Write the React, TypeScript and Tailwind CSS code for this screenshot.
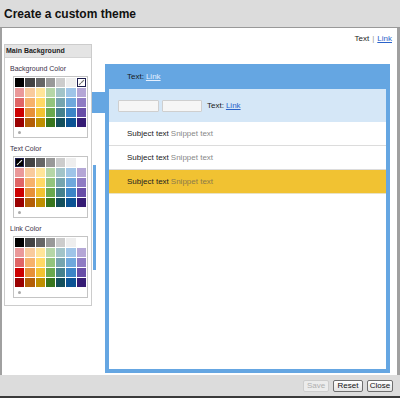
import React from 'react'

const PALETTE: string[][] = [
  ['#000000', '#434343', '#666666', '#999999', '#cccccc', '#eeeeee', '#ffffff'],
  ['#ea9999', '#f9cb9c', '#ffe599', '#b6d7a8', '#a2c4c9', '#9fc5e8', '#b4a7d6'],
  ['#e06666', '#f6b26b', '#ffd966', '#93c47d', '#76a5af', '#6fa8dc', '#8e7cc3'],
  ['#cc0000', '#e69138', '#f1c232', '#6aa84f', '#45818e', '#3d85c6', '#674ea7'],
  ['#990000', '#b45f06', '#bf9000', '#38761d', '#134f5c', '#0b5394', '#351c75'],
]

function Check({ light }: { light?: boolean }) {
  return (
    <svg width="7" height="7" viewBox="0 0 8 8" className="m-auto">
      <path
        d="M1.5 6.5 L3 5 M4 4 L6.5 1.5"
        stroke={light ? '#e8e8e8' : '#777'}
        strokeWidth="1.3"
        fill="none"
        strokeLinecap="round"
      />
    </svg>
  )
}

function Palette({ selected }: { selected?: string }) {
  return (
    <div className="ml-[8px] w-[75px] border border-[#c4c4c4] bg-white p-[1px] pb-0">
      <div className="grid grid-cols-7 gap-[1px]">
        {PALETTE.flat().map((c) => {
          const isSel = c === selected
          return (
            <div
              key={c}
              className={
                isSel
                  ? 'h-[9px] flex border border-[#1d1d4d]'
                  : 'h-[9px]'
              }
              style={{ backgroundColor: c }}
            >
              {isSel && <Check light={c === '#000000'} />}
            </div>
          )
        })}
      </div>
      <div className="h-[10px] flex items-center pl-[3px]">
        <span className="w-[3px] h-[3px] rounded-full bg-[#aaa]" />
      </div>
    </div>
  )
}

function Section({ label, selected }: { label: string; selected?: string }) {
  return (
    <div>
      <div className="mt-[6px] h-[10px] ml-[5px] text-[7px] leading-[10px] text-[#3a2f48]">{label}</div>
      <div className="mt-[2px]">
        <Palette selected={selected} />
      </div>
    </div>
  )
}

function Row({ bg, snippet, border }: { bg: string; snippet: string; border: string }) {
  return (
    <div className={`h-[24px] flex items-center pl-[18px] text-[8px] border-b ${bg} ${border}`}>
      <span className="text-[#222]">Subject text</span>
      <span className={`ml-[2px] ${snippet}`}>Snippet text</span>
    </div>
  )
}

export default function App() {
  return (
    <div className="w-[400px] h-[398px] flex flex-col bg-[#dcdcdc] font-['Liberation_Sans',Arial,sans-serif] overflow-hidden">
      <div className="h-[28px] flex items-center pl-[4px] border-b border-[#999] text-[12px] font-bold text-[#111]">
        Create a custom theme
      </div>

      <div className="flex-1 bg-white border-l-2 border-r-[3px] border-[#a0a0a0] flex flex-col">
        <div className="pt-[6px] h-[16px] flex justify-end pr-[5px] text-[8px] leading-[10px]">
          <span className="text-[#222]">Text</span>
          <span className="mx-[3px] text-[#999]">|</span>
          <span className="text-[#2a62c9] underline">Link</span>
        </div>

        <div className="flex items-start">
          <div className="ml-[2px] w-[88px] h-[262px] border border-[#ccc]">
            <div className="h-[13px] bg-[#e4e4e4] border-b border-[#d4d4d4] pl-[1px] flex items-center text-[7px] font-bold text-[#222]">
              Main Background
            </div>
            <Section label="Background Color" selected="#ffffff" />
            <Section label="Text Color" selected="#000000" />
            <Section label="Link Color" />
          </div>

          <div className="w-[13px] flex flex-col">
            <div className="mt-[48px] h-[21px] bg-[#65a6e2]" />
            <div className="mt-[52px] ml-[1px] w-[3px] h-[105px] bg-[#65a6e2]" />
          </div>

          <div className="mt-[20px] w-[285px] h-[309px] bg-[#65a6e2] flex flex-col px-[4px] pb-[4px]">
            <div className="h-[25px] flex items-center pl-[18px] text-[8px]">
              <span className="text-[#1a1a1a]">Text:</span>
              <span className="ml-[2px] text-[#e4f0ff] underline">Link</span>
            </div>
            <div className="flex-1 bg-white flex flex-col">
              <div className="h-[33px] bg-[#d5e7f7] flex items-center pl-[9px] text-[8px]">
                <div className="w-[41px] h-[12px] bg-[#f6f6f6] border border-[#cfcfcf] rounded-[1px]" />
                <div className="ml-[3px] w-[40px] h-[12px] bg-[#f6f6f6] border border-[#cfcfcf] rounded-[1px]" />
                <span className="ml-[5px] text-[#1a1a1a]">Text:</span>
                <span className="ml-[2px] text-[#2a62c9] underline">Link</span>
              </div>
              <Row bg="bg-white" snippet="text-[#888]" border="border-[#dcdcdc]" />
              <Row bg="bg-white" snippet="text-[#888]" border="border-[#dcdcdc]" />
              <Row bg="bg-[#f1c232]" snippet="text-[#8c7b4c]" border="border-[#e9e2c4]" />
            </div>
          </div>
        </div>
      </div>

      <div className="h-[21px] flex items-center justify-end pr-[7px] gap-[4px] pt-[1px]">
        <button className="w-[26px] h-[12px] rounded-[2px] border border-[#cdcdcd] bg-[#ececec] text-[8px] leading-none text-[#b0b0b0]">
          Save
        </button>
        <button className="w-[30px] h-[12px] rounded-[2px] border border-[#6e6e6e] bg-gradient-to-b from-white to-[#e4e4e4] text-[8px] leading-none text-[#111]">
          Reset
        </button>
        <button className="w-[26px] h-[12px] rounded-[2px] border border-[#6e6e6e] bg-gradient-to-b from-white to-[#e4e4e4] text-[8px] leading-none text-[#111]">
          Close
        </button>
      </div>
      <div className="h-[2px] bg-[#3a3a3a]" />
    </div>
  )
}
